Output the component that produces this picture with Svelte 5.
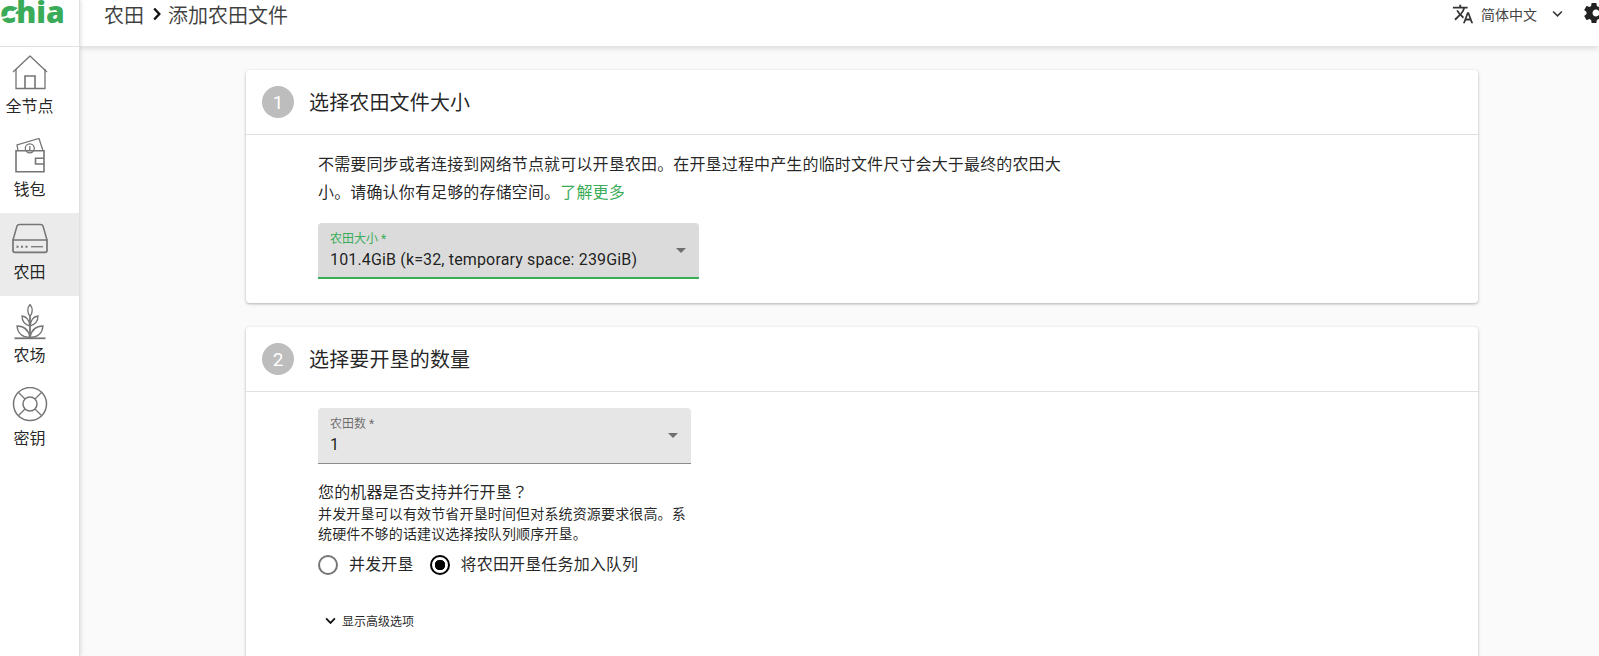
<script>
  const navItems = [
    { label: "全节点", icon: "home" },
    { label: "钱包", icon: "wallet" },
    { label: "农田", icon: "plot", active: true },
    { label: "农场", icon: "farm" },
    { label: "密钥", icon: "keys" },
  ];
</script>

<div class="app">
  <aside class="sidebar">
    <div class="logo">
      <span class="logo-text">chia</span>
      <svg class="logo-leaf" viewBox="0 0 20 24" fill="none">
        <path d="M15 8 Q18 10 17 14" stroke="#3aac59" stroke-width="3" />
        <path d="M0 18 Q9 18 18 9" stroke="#fff" stroke-width="1.800" />
      </svg>
    </div>
    <nav>
      {#each navItems as item}
        <div class="nav-item" class:active={item.active}>
          <svg class="nav-icon" viewBox="0 0 36 36" fill="none" stroke="#757575" stroke-width="1.300">
            {#if item.icon === "home"}
              <path d="M1 17 L18 1 L35 17" stroke-linejoin="round" />
              <path d="M4 14 V33.500 H33 V14" />
              <path d="M13 33.500 V21 H23 V33.500" stroke-width="1.600" />
            {:else if item.icon === "wallet"}
              <path d="M6 12.700 L5 7 L27 0.500 L31 12.700" />
              <circle cx="17.800" cy="10.300" r="4.500" />
              <path d="M17.800 8 V12.700" />
              <path d="M4 12.700 H32 V33.700 H4 Z" stroke-width="1.600" />
              <path d="M32 20.300 H23.500 V26 H32" stroke-width="1.600" />
            {:else if item.icon === "plot"}
              <path d="M1 19 L5 5 Q5.500 3.500 7.500 3.500 H28.500 Q30.500 3.500 31 5 L35 19" stroke-width="1.500" />
              <path d="M1 19 H35 V29.500 Q35 31.300 33 31.300 H3 Q1 31.300 1 29.500 Z" stroke-width="1.700" />
              <path d="M19 25.700 H31" />
              <path d="M4.500 25.700 H15.500" stroke-width="2" stroke-dasharray="2 2.500" />
            {:else if item.icon === "farm"}
              <path d="M18 0.500 Q22.500 6 18 12.500 Q13.500 6 18 0.500 Z" />
              <path d="M18 12.500 V34" stroke-width="1.800" />
              <path d="M18 22 Q10 20 10 12 Q17 13 18 22 Z M18 22 Q26 20 26 12 Q19 13 18 22 Z" />
              <path d="M18 33.500 Q6 33 5 22 Q16 22 18 33.500 Z M18 33.500 Q30 33 31 22 Q20 22 18 33.500 Z" />
              <path d="M2.500 34.300 H33.500" stroke-width="1.800" />
            {:else}
              <circle cx="18" cy="17" r="16.500" stroke-width="1.500" />
              <circle cx="18" cy="17" r="7" stroke-width="1.500" />
              <path d="M6.500 5.500 L13 12 M29.500 5.500 L23 12 M6.500 28.500 L13 22 M29.500 28.500 L23 22" />
            {/if}
          </svg>
          <span>{item.label}</span>
        </div>
      {/each}
    </nav>
  </aside>

  <div class="content">
    <header class="topbar">
      <div class="crumbs">
        <span>农田</span>
        <svg class="crumb-sep" viewBox="0 0 8 14"><path d="M1.200 1.500 L6.300 7 L1.200 12.500" fill="none" stroke="#111" stroke-width="2.400" /></svg>
        <span>添加农田文件</span>
      </div>
      <div class="lang">
        <svg class="lang-icon" viewBox="0 0 24 24"><path fill="#333" d="M12.870 15.070l-2.540-2.510.030-.030c1.740-1.940 2.980-4.170 3.710-6.530H17V4h-7V2H8v2H1v1.990h11.170C11.500 7.920 10.440 9.750 9 11.350 8.070 10.320 7.300 9.190 6.690 8h-2c.73 1.630 1.730 3.170 2.980 4.560l-5.090 5.020L4 19l5-5 3.110 3.110.76-2.040zM18.500 10h-2L12 22h2l1.120-3h4.750L21 22h2l-4.500-12zm-2.620 7l1.620-4.330L19.120 17h-3.240z" /></svg>
        <span class="lang-name">简体中文</span>
        <svg class="lang-caret" viewBox="0 0 12 8"><path d="M1.200 1.200 L6 6 L10.800 1.200" fill="none" stroke="#333" stroke-width="1.700" /></svg>
        <svg class="gear" viewBox="0 0 24 24"><path fill="#222" fill-rule="evenodd" d="M19.430 12.980c.04-.32.070-.64.070-.98s-.030-.66-.070-.98l2.110-1.650c.19-.15.240-.42.120-.64l-2-3.460c-.12-.22-.39-.3-.61-.22l-2.490 1c-.52-.4-1.080-.73-1.690-.98l-.38-2.650C14.460 2.180 14.250 2 14 2h-4c-.25 0-.46.18-.49.42l-.38 2.650c-.61.25-1.170.59-1.690.98l-2.490-1c-.23-.09-.49 0-.61.22l-2 3.460c-.13.22-.07.49.12.64l2.110 1.650c-.04.32-.07.65-.07.98s.030.66.070.98l-2.110 1.650c-.19.15-.24.42-.12.64l2 3.460c.12.22.39.3.61.22l2.490-1c.52.4 1.080.73 1.690.98l.38 2.650c.03.24.24.42.49.42h4c.25 0 .46-.18.49-.42l.38-2.650c.61-.25 1.170-.59 1.690-.98l2.490 1c.23.09.49 0 .61-.22l2-3.460c.12-.22.07-.49-.12-.64l-2.110-1.650zM14 15.500c-1.930 0-3.500-1.570-3.500-3.500s1.570-3.500 3.500-3.500 3.500 1.570 3.500 3.500-1.570 3.500-3.500 3.500z" /></svg>
      </div>
    </header>

    <main>
      <section class="card">
        <div class="card-head">
          <span class="step">1</span>
          <h2>选择农田文件大小</h2>
        </div>
        <div class="card-body">
          <p class="intro">不需要同步或者连接到网络节点就可以开垦农田。在开垦过程中产生的临时文件尺寸会大于最终的农田大小。请确认你有足够的存储空间。<span class="link">了解更多</span></p>
          <div class="select focused">
            <span class="select-label">农田大小 *</span>
            <span class="select-value">101.4GiB (k=32, temporary space: 239GiB)</span>
            <span class="arrow"></span>
          </div>
        </div>
      </section>

      <section class="card">
        <div class="card-head">
          <span class="step">2</span>
          <h2>选择要开垦的数量</h2>
        </div>
        <div class="card-body">
          <div class="select count">
            <span class="select-label">农田数 *</span>
            <span class="select-value">1</span>
            <span class="arrow"></span>
          </div>
          <p class="question">您的机器是否支持并行开垦<span class="fullwidth">？</span></p>
          <p class="hint">并发开垦可以有效节省开垦时间但对系统资源要求很高。系统硬件不够的话建议选择按队列顺序开垦。</p>
          <div class="radios">
            <label class="radio"><span class="ring"></span>并发开垦</label>
            <label class="radio"><span class="ring on"></span>将农田开垦任务加入队列</label>
          </div>
          <div class="advanced">
            <svg viewBox="0 0 12 8"><path d="M1.200 1.200 L6 6 L10.800 1.200" fill="none" stroke="#111" stroke-width="2" /></svg>
            <span>显示高级选项</span>
          </div>
        </div>
      </section>
    </main>
  </div>
</div>

<style>
  :global(body) {
    margin: 0;
    font-family: Roboto, "Noto Sans CJK SC", sans-serif;
    color: rgba(0, 0, 0, 0.87);
  }

  p, h2 {
    margin: 0;
    font-weight: 400;
  }

  .app {
    display: flex;
    height: 656px;
    overflow: hidden;
    background: #fafafa;
  }

  .sidebar {
    width: 79px;
    flex: none;
    background: #fff;
    border-right: 1px solid #e0e0e0;
    box-shadow: 1px 0 4px rgba(0, 0, 0, 0.12);
    z-index: 3;
  }

  .logo {
    position: relative;
    height: 47px;
    border-bottom: 1px solid #e0e0e0;
    box-sizing: border-box;
    overflow: hidden;
  }

  .logo-text {
    display: block;
    margin-top: -11px;
    font: 800 30px/46px "Open Sans", sans-serif;
    color: #3aac59;
  }

  .logo-leaf {
    position: absolute;
    left: 0;
    top: 0;
    width: 20px;
    height: 24px;
  }

  .nav-item {
    height: 83px;
    box-sizing: border-box;
    padding: 8px 20px 0 0;
    display: flex;
    flex-direction: column;
    align-items: center;
    font-size: 16px;
    line-height: 20px;
  }

  .nav-item.active {
    background: #ebebeb;
  }

  .nav-icon {
    width: 36px;
    height: 36px;
    margin-bottom: 6px;
  }

  .content {
    flex: 1;
    min-width: 0;
    display: flex;
    flex-direction: column;
  }

  .topbar {
    height: 46px;
    flex: none;
    background: #fff;
    box-shadow: 0 2px 6px rgba(0, 0, 0, 0.14);
    display: flex;
    justify-content: space-between;
    z-index: 2;
  }

  .crumbs {
    display: flex;
    align-items: center;
    gap: 9px;
    height: 28px;
    padding-left: 24px;
    font-size: 20px;
    color: rgba(0, 0, 0, 0.75);
  }

  .crumb-sep {
    width: 8px;
    height: 14px;
    margin-right: -2px;
  }

  .lang {
    display: flex;
    align-items: center;
    height: 28px;
    overflow: hidden;
    font-size: 14px;
    color: #444;
  }

  .lang-icon {
    width: 22px;
    height: 22px;
    margin-right: 7px;
  }

  .lang-caret {
    width: 11px;
    height: 8px;
    margin-left: 15px;
  }

  .gear {
    width: 24px;
    height: 24px;
    flex: none;
    margin: -2px -7px 0 19px;
  }

  main {
    flex: 1;
    padding: 24px 121px 0 166px;
    display: flex;
    flex-direction: column;
    gap: 24px;
  }

  .card {
    flex: none;
    background: #fff;
    border-radius: 4px;
    box-shadow: 0 1px 3px rgba(0, 0, 0, 0.3);
  }

  .card-head {
    height: 65px;
    box-sizing: border-box;
    border-bottom: 1px solid #e0e0e0;
    display: flex;
    align-items: center;
    gap: 15px;
    padding-left: 16px;
  }

  .step {
    width: 32px;
    height: 32px;
    border-radius: 50%;
    background: #bdbdbd;
    color: #fff;
    font-size: 19px;
    display: flex;
    align-items: center;
    justify-content: center;
  }

  h2 {
    padding-bottom: 2px;
    font-size: 20px;
    letter-spacing: 0.15px;
  }

  .card-body {
    padding: 16px 0 24px 72px;
  }

  .intro {
    width: 744px;
    font-size: 16px;
    line-height: 28px;
    letter-spacing: 0.15px;
  }

  .link {
    color: #3aac59;
  }

  .select {
    position: relative;
    box-sizing: border-box;
    background: #e6e6e6;
    border-radius: 4px 4px 0 0;
    border-bottom: 1px solid #8a8a8a;
    padding: 9px 12px 0;
    display: flex;
    flex-direction: column;
  }

  .select.focused {
    width: 381px;
    height: 56px;
    margin-top: 16px;
    background: #dbdbdb;
    border-bottom: 2px solid #3aac59;
  }

  .select.count {
    width: 373px;
    height: 56px;
  }

  .select-label {
    font-size: 12px;
    line-height: 14px;
    color: rgba(0, 0, 0, 0.54);
  }

  .focused .select-label {
    color: #3aac59;
  }

  .select-value {
    font-size: 16px;
    line-height: 28px;
    letter-spacing: 0.15px;
  }

  .arrow {
    position: absolute;
    right: 13px;
    top: 25px;
    border: 5px solid transparent;
    border-top-color: #6f6f6f;
    border-bottom-width: 0;
  }

  .question {
    margin-top: 16px;
    font-size: 16px;
    line-height: 22px;
    letter-spacing: 0.15px;
  }

  .fullwidth {
    font-family: "Noto Sans CJK JP", sans-serif;
  }

  .hint {
    width: 373px;
    font-size: 14px;
    line-height: 20px;
    letter-spacing: 0.15px;
  }

  .radios {
    display: flex;
    gap: 16px;
    margin-top: 9px;
    font-size: 16px;
    line-height: 24px;
    letter-spacing: 0.15px;
  }

  .radio {
    display: flex;
    align-items: center;
    gap: 11px;
  }

  .ring {
    width: 20px;
    height: 20px;
    box-sizing: border-box;
    border: 2px solid #757575;
    border-radius: 50%;
  }

  .ring.on {
    border-color: #000;
    background: radial-gradient(circle, #000 0 5px, transparent 5.500px);
  }

  .advanced {
    display: flex;
    align-items: center;
    gap: 6px;
    margin: 35px 0 40px 7px;
    font-size: 12px;
  }

  .advanced svg {
    width: 11px;
    height: 8px;
  }
</style>
